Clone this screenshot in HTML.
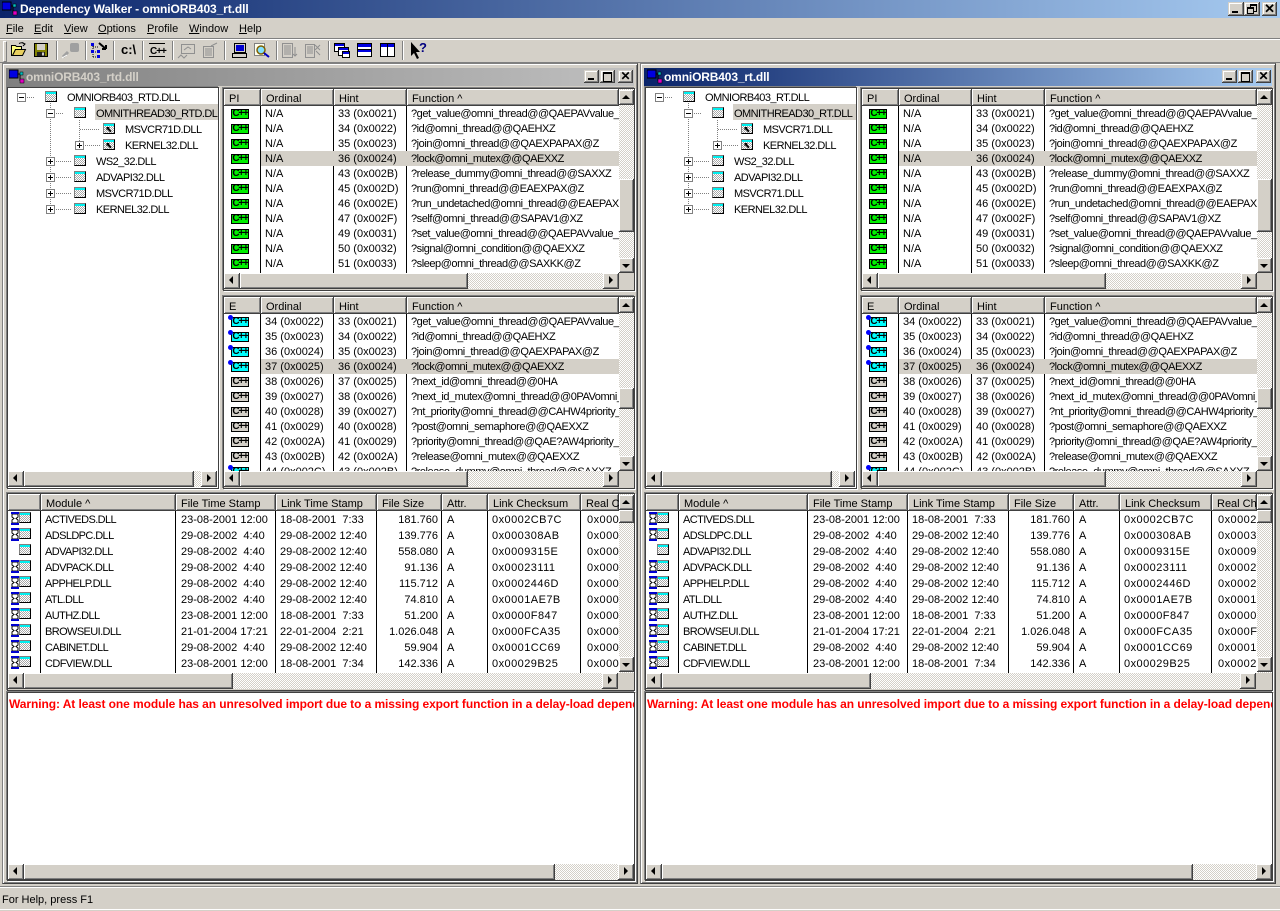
<!DOCTYPE html>
<html><head><meta charset="utf-8"><title>Dependency Walker</title>
<style>
html,body{margin:0;padding:0;width:1280px;height:911px;overflow:hidden;background:#d4d0c8;font:11px/15px "Liberation Sans",Arial,sans-serif;color:#000}
div,span,i{position:absolute;white-space:pre;font-style:normal;display:block}
u{text-decoration:underline}
#tb{left:0;top:0;width:1280px;height:18px;background:linear-gradient(90deg,#0a246a,#a6caf0);color:#fff;font-weight:bold;font-size:12px;letter-spacing:-.1px;line-height:18px}
.b{background:#d4d0c8;box-shadow:inset -1px -1px #404040,inset 1px 1px #fff,inset -2px -2px #808080}
.b2{background:#d4d0c8;box-shadow:inset -1px -1px #404040,inset 1px 1px #d4d0c8,inset -2px -2px #808080,inset 2px 2px #fff}
.al::after,.ar::after,.au::after,.ad::after{content:"";position:absolute;border:solid transparent;width:0;height:0}
.al::after{left:5px;top:3px;border-width:4px 4px 4px 0;border-right-color:#000}
.ar::after{left:6px;top:3px;border-width:4px 0 4px 4px;border-left-color:#000}
.au::after{left:3px;top:5px;border-width:0 4px 4px 4px;border-bottom-color:#000}
.ad::after{left:3px;top:6px;border-width:4px 4px 0 4px;border-top-color:#000}
.dt{background:repeating-conic-gradient(#d4d0c8 0 25%,#fff 0 50%) 0 0/2px 2px}
.mn{top:21px;height:16px;line-height:16px}
.sp{top:41px;width:1px;height:19px;background:#808080;box-shadow:1px 0 #fff}
.f{left:2px;top:63px;width:634px;height:819px;background:#d4d0c8;border:1px solid;border-color:#808080 #404040 #404040 #808080;box-shadow:inset 1px 1px #fff,inset -1px -1px #808080}
.t{left:6px;top:68px;width:628px;height:18px;line-height:19px;font-weight:bold;font-size:12px;letter-spacing:-.15px}
.ti{background:linear-gradient(90deg,#808080,#c0c0c0);color:#d4d0c8}
.ta{background:linear-gradient(90deg,#0a246a,#a6caf0);color:#fff}
.p{background:#fff;overflow:hidden;box-shadow:0 0 0 1px #404040,-1px -1px 0 1px #808080,1px 1px 0 1px #fff}
.c{left:7px;top:3px;width:16px;height:8px;border:1px solid #000;font:bold 10px/8px "Liberation Sans",sans-serif;letter-spacing:-1.2px;text-align:center;overflow:hidden}
.g{background:#00f000}.y{background:#00ffff}.n{background:#d4d0c8}
.d{left:4px;top:1px;width:5px;height:5px;border-radius:50%;background:#0000ff}
.r{left:0;width:395px;height:15px;line-height:15px}
.hl{background:linear-gradient(90deg,transparent 37px,#d4d0c8 37px)}
.r span{top:1px}
.r span:nth-of-type(1){left:41px}.r span:nth-of-type(2){left:114px}.r span:nth-of-type(3){left:187px;letter-spacing:-.45px}
.v{top:0;width:1px;background:#000}
.hd{top:0;height:17px;line-height:18px;background:#d4d0c8;box-shadow:inset -1px -1px #404040,inset 1px 1px #fff,inset -2px -2px #808080;overflow:hidden}
.hd span{left:5px;top:1px}
.tr{height:16px;line-height:18px;letter-spacing:-.55px}
.m{width:10px;height:9px;border:1px solid #808080;border-right-color:#000;border-bottom-color:#000;background:linear-gradient(#00f0f0,#00f0f0) 0 0/100% 2px no-repeat,repeating-conic-gradient(#a8a8a8 0 25%,#fff 0 50%) 0 0/2px 2px}
.e{width:7px;height:7px;border:1px solid #808080;background:#fff}
.e::before{content:"";position:absolute;left:1px;top:3px;width:5px;height:1px;background:#000}
.e.pl::after{content:"";position:absolute;left:3px;top:1px;width:1px;height:5px;background:#000}
.dh{height:1px;background:repeating-linear-gradient(90deg,#808080 0 1px,transparent 1px 2px)}
.dw{width:1px;background:repeating-linear-gradient(0deg,#808080 0 1px,transparent 1px 2px)}
.q{left:0;width:610px;height:16px;line-height:16px}
.q svg{position:absolute;left:3px;top:1px}
.q .m{left:11px;top:1px}
.q span{top:1px}
.q span:nth-of-type(1){letter-spacing:-.6px}
.q span:nth-of-type(6),.q span:nth-of-type(7){letter-spacing:.45px}
.ml .q span:nth-of-type(1){left:37px}.ml .q span:nth-of-type(2){left:173px}.ml .q span:nth-of-type(3){left:272px}.ml .q span:nth-of-type(4){left:369px;width:61px;text-align:right}.ml .q span:nth-of-type(5){left:439px}.ml .q span:nth-of-type(6){left:484px}.ml .q span:nth-of-type(7){left:579px}
.mr .q span:nth-of-type(1){left:37px}.mr .q span:nth-of-type(2){left:167px}.mr .q span:nth-of-type(3){left:266px}.mr .q span:nth-of-type(4){left:363px;width:61px;text-align:right}.mr .q span:nth-of-type(5){left:433px}.mr .q span:nth-of-type(6){left:478px}.mr .q span:nth-of-type(7){left:572px}
.log{left:1px;top:4px;color:#f00;font-weight:bold;font-size:12px;letter-spacing:-.08px;line-height:15px}
</style></head><body>
<svg width="0" height="0" style="position:absolute"><defs>
<symbol id="app" viewBox="0 0 16 16"><rect x="0" y="1" width="9" height="8" fill="#0000e0" stroke="#000"/><path d="M9 5h3M11 5v7M11 12h1" stroke="#000" fill="none"/><rect x="11" y="3" width="3" height="3" fill="#00c0c0" stroke="#000" stroke-width=".5"/><rect x="11" y="10" width="4" height="4" fill="#e000c0" stroke="#000" stroke-width=".5"/></symbol>
<symbol id="hg" viewBox="0 0 8 13"><path d="M1 2h6v3L5 6.500 7 8v3H1V8l2-1.500L1 5z" fill="#fff" stroke="#000"/><rect width="8" height="2" fill="#0000d0"/><rect y="11" width="8" height="2" fill="#0000d0"/></symbol>
<symbol id="ua" viewBox="0 0 12 10"><path d="M3 2h4L5.800 3.200 9 7 7.500 8.500 4 4.800 3 6z" fill="#000"/></symbol>
</defs></svg>

<div id="tb"><svg style="position:absolute;left:2px;top:1px" width="16" height="16"><use href="#app"/></svg><span style="left:20px;top:0">Dependency Walker - omniORB403_rt.dll</span>
<div class="b2" style="left:1228px;top:2px;width:16px;height:14px"><i style="left:4px;top:9px;width:6px;height:2px;background:#000"></i></div>
<div class="b2" style="left:1244px;top:2px;width:16px;height:14px"><i style="left:6px;top:2px;width:5px;height:5px;border:1px solid #000;border-top-width:2px"></i><i style="left:3px;top:5px;width:5px;height:4px;border:1px solid #000;border-top-width:2px;background:#d4d0c8"></i></div>
<div class="b2" style="left:1262px;top:2px;width:15px;height:14px;color:#000;font:bold 13px/14px 'Liberation Sans',sans-serif;text-align:center">✕</div></div>

<span class="mn" style="left:6px"><u>F</u>ile</span><span class="mn" style="left:34px"><u>E</u>dit</span><span class="mn" style="left:64px"><u>V</u>iew</span><span class="mn" style="left:98px"><u>O</u>ptions</span><span class="mn" style="left:147px"><u>P</u>rofile</span><span class="mn" style="left:189px"><u>W</u>indow</span><span class="mn" style="left:239px"><u>H</u>elp</span>

<div style="left:0;top:38px;width:1280px;height:1px;background:#808080"></div><div style="left:0;top:39px;width:1280px;height:1px;background:#fff"></div>
<div style="left:3px;top:41px;width:2px;height:19px;background:#d4d0c8;border:1px solid;border-color:#fff #808080 #808080 #fff"></div>
<i class="sp" style="left:56px"></i><i class="sp" style="left:85px"></i><i class="sp" style="left:113px"></i><i class="sp" style="left:142px"></i><i class="sp" style="left:172px"></i><i class="sp" style="left:224px"></i><i class="sp" style="left:276px"></i><i class="sp" style="left:328px"></i><i class="sp" style="left:402px"></i>

<svg style="position:absolute;left:0;top:36px" width="440" height="26" viewBox="0 36 440 26">
<path d="M11.500 45.500h4l1 1h5v3h-6l-3 6h-1z" fill="#ffff80" stroke="#000"/><path d="M12.500 55.500l3-6h10l-3 6z" fill="#e8d060" stroke="#000"/><path d="M19 43.500q3-1.500 5 0" stroke="#000" fill="none"/><path d="M22 42.500l3 1.500-2 2" stroke="#000" fill="none"/>
<rect x="34.500" y="43.500" width="13" height="13" fill="#808000" stroke="#000"/><rect x="37" y="44" width="8" height="6" fill="#d4d0c8"/><rect x="37" y="52" width="8" height="4" fill="#202020"/><rect x="42" y="52.500" width="2" height="3" fill="#d4d0c8"/>
<rect x="70" y="43" width="9" height="9" rx="2" fill="#a0a0a0"/><path d="M63 57l5-5" stroke="#a0a0a0" stroke-width="3"/><path d="M62 58l5-3" stroke="#fff"/>
<path d="M93 44v13M93 47h5M93 52h5M93 57h5" stroke="#000" stroke-dasharray="1 1" fill="none"/><rect x="91" y="43" width="3" height="3" fill="#0000e0"/><rect x="91" y="50" width="3" height="3" fill="#0000e0"/><rect x="97" y="50" width="3" height="3" fill="#0000e0"/><rect x="97" y="55" width="3" height="3" fill="#0000e0"/><path d="M99 43l7 6M106 49v-4M106 49h-4" stroke="#000" stroke-width="2" fill="none"/>
<text x="121" y="54" font-family="Liberation Sans" font-weight="bold" font-size="13">c:\</text>
<path d="M149 43.500h16M149 56.500h16" stroke="#000"/><text x="150" y="54" font-family="Liberation Sans" font-weight="bold" font-size="10" letter-spacing="-1">C++</text>
<g fill="none" stroke="#909090"><rect x="181.500" y="44.500" width="13" height="9"/><path d="M178 58l3-3 3 3 3-3M184 50l4-3 3 2"/><rect x="203.500" y="46.500" width="10" height="11"/><path d="M205 49h7M205 51h7M205 53h7M205 55h7M211 46l6-3"/></g>
<rect x="234.500" y="43.500" width="11" height="9" fill="#d4d0c8" stroke="#000"/><rect x="236" y="45" width="8" height="6" fill="#0000d0"/><rect x="232.500" y="53.500" width="14" height="4" fill="#d4d0c8" stroke="#000"/>
<rect x="254.500" y="43.500" width="10" height="12" fill="#fffff0" stroke="#808080"/><circle cx="261" cy="50" r="4" fill="#80e0ff" stroke="#806000" stroke-width="1.500"/><path d="M264 53l5 4" stroke="#0000c0" stroke-width="2"/>
<g fill="none" stroke="#909090"><rect x="282.500" y="43.500" width="10" height="14"/><path d="M284 46h7M284 48h7M284 50h7M284 52h7M284 54h7M295 47v9M293 54l2 2 2-2"/><rect x="305.500" y="44.500" width="9" height="13"/><path d="M307 47h6M307 49h6M307 51h6M307 53h6M315 45l5 5M320 45l-5 5M316 51l4 4"/></g>
<g fill="#fff" stroke="#000"><rect x="334.500" y="43.500" width="10" height="8"/><rect x="338.500" y="47.500" width="10" height="8"/><rect x="342.500" y="51.500" width="7" height="6"/><rect x="357.500" y="43.500" width="14" height="13"/><rect x="380.500" y="43.500" width="14" height="13"/></g>
<path d="M335 44h9v2h-9zM339 48h9v2h-9zM343 52h6v2h-6zM358 44h13v3h-13zM358 50h13v2h-13zM381 44h13v3h-13z" fill="#0000e0"/><path d="M357 49.500h14M387.500 44v12" stroke="#000"/>
<path d="M411 42v14l3-3 3 6 2-1-3-6h4z" fill="#000"/><text x="419" y="52" font-family="Liberation Sans" font-weight="bold" font-size="13" fill="#000080">?</text>
</svg>

<div style="left:0;top:62px;width:1280px;height:1px;background:#808080"></div>
<div style="left:0;top:886px;width:1280px;height:1px;background:#808080"></div>
<div style="left:0;top:887px;width:1280px;height:1px;background:#fff"></div>
<span style="left:2px;top:893px">For Help, press F1</span>
<div style="left:0;top:909px;width:1280px;height:1px;background:#fff"></div>

<!-- LEFT WINDOW -->
<div style="left:0;top:0;width:640px;height:890px">
<div class="f"></div>
<div class="t ti"><svg style="position:absolute;left:3px;top:1px" width="16" height="16"><use href="#app"/></svg><span style="left:20px;top:0">omniORB403_rtd.dll</span>
<div class="b2" style="left:578px;top:2px;width:15px;height:13px"><i style="left:4px;top:8px;width:6px;height:2px;background:#000"></i></div>
<div class="b2" style="left:594px;top:2px;width:15px;height:13px"><i style="left:3px;top:2px;width:7px;height:7px;border:1px solid #000;border-top-width:2px"></i></div>
<div class="b2" style="left:612px;top:2px;width:15px;height:13px;color:#000;font:bold 12px/13px 'Liberation Sans',sans-serif;text-align:center">✕</div></div>

<div class="p" style="left:8px;top:88px;width:210px;height:400px">
<div class="e" style="left:9px;top:5px"></div><div class="dh" style="left:19px;top:9px;width:8px"></div><i class="m" style="left:37px;top:3px"></i><span class="tr" style="left:59px;top:1px">OMNIORB403_RTD.DLL</span>
<div class="dw" style="left:42px;top:15px;height:107px"></div>
<div class="e" style="left:38px;top:21px"></div><div class="dh" style="left:48px;top:25px;width:8px"></div><i class="m" style="left:66px;top:19px"></i><span class="tr" style="left:87px;top:16px;width:122px;background:#d4d0c8;padding-left:1px;line-height:20px">OMNITHREAD30_RTD.DLL</span>
<div class="dw" style="left:71px;top:31px;height:26px"></div><div class="dh" style="left:72px;top:41px;width:20px"></div><i class="m" style="left:95px;top:35px"></i><svg style="position:absolute;left:96px;top:37px" width="10" height="9"><use href="#ua"/></svg><span class="tr" style="left:117px;top:33px">MSVCR71D.DLL</span>
<div class="e pl" style="left:67px;top:53px"></div><div class="dh" style="left:77px;top:57px;width:15px"></div><i class="m" style="left:95px;top:51px"></i><svg style="position:absolute;left:96px;top:53px" width="10" height="9"><use href="#ua"/></svg><span class="tr" style="left:117px;top:49px">KERNEL32.DLL</span>
<div class="e pl" style="left:38px;top:69px"></div><div class="dh" style="left:48px;top:73px;width:16px"></div><i class="m" style="left:66px;top:67px"></i><span class="tr" style="left:88px;top:65px">WS2_32.DLL</span>
<div class="e pl" style="left:38px;top:85px"></div><div class="dh" style="left:48px;top:89px;width:16px"></div><i class="m" style="left:66px;top:83px"></i><span class="tr" style="left:88px;top:81px">ADVAPI32.DLL</span>
<div class="e pl" style="left:38px;top:101px"></div><div class="dh" style="left:48px;top:105px;width:16px"></div><i class="m" style="left:66px;top:99px"></i><span class="tr" style="left:88px;top:97px">MSVCR71D.DLL</span>
<div class="e pl" style="left:38px;top:117px"></div><div class="dh" style="left:48px;top:121px;width:16px"></div><i class="m" style="left:66px;top:115px"></i><span class="tr" style="left:88px;top:113px">KERNEL32.DLL</span>
<div class="b al" style="left:0;top:383px;width:16px;height:16px"></div><div class="b" style="left:16px;top:383px;width:170px;height:16px"></div><div class="dt" style="left:186px;top:383px;width:7px;height:16px"></div><div class="b ar" style="left:193px;top:383px;width:16px;height:16px"></div>
</div>

<div class="p" style="left:224px;top:89px;width:410px;height:201px">
<i class="v" style="left:36px;height:184px"></i><i class="v" style="left:109px;height:184px"></i><i class="v" style="left:182px;height:184px"></i>
<div class="hd" style="left:0;width:37px"><span>PI</span></div><div class="hd" style="left:37px;width:73px"><span>Ordinal</span></div><div class="hd" style="left:110px;width:73px"><span>Hint</span></div><div class="hd" style="left:183px;width:212px"><span>Function ^</span></div>
<div class="r" style="top:17px"><i class="c g">C++</i><span>N/A</span><span>33 (0x0021)</span><span>?get_value@omni_thread@@QAEPAVvalue_t@@XZ</span></div>
<div class="r" style="top:32px"><i class="c g">C++</i><span>N/A</span><span>34 (0x0022)</span><span>?id@omni_thread@@QAEHXZ</span></div>
<div class="r" style="top:47px"><i class="c g">C++</i><span>N/A</span><span>35 (0x0023)</span><span>?join@omni_thread@@QAEXPAPAX@Z</span></div>
<div class="r hl" style="top:62px"><i class="c g">C++</i><span>N/A</span><span>36 (0x0024)</span><span>?lock@omni_mutex@@QAEXXZ</span></div>
<div class="r" style="top:77px"><i class="c g">C++</i><span>N/A</span><span>43 (0x002B)</span><span>?release_dummy@omni_thread@@SAXXZ</span></div>
<div class="r" style="top:92px"><i class="c g">C++</i><span>N/A</span><span>45 (0x002D)</span><span>?run@omni_thread@@EAEXPAX@Z</span></div>
<div class="r" style="top:107px"><i class="c g">C++</i><span>N/A</span><span>46 (0x002E)</span><span>?run_undetached@omni_thread@@EAEPAXPAX@Z</span></div>
<div class="r" style="top:122px"><i class="c g">C++</i><span>N/A</span><span>47 (0x002F)</span><span>?self@omni_thread@@SAPAV1@XZ</span></div>
<div class="r" style="top:137px"><i class="c g">C++</i><span>N/A</span><span>49 (0x0031)</span><span>?set_value@omni_thread@@QAEPAVvalue_t@@XZ</span></div>
<div class="r" style="top:152px"><i class="c g">C++</i><span>N/A</span><span>50 (0x0032)</span><span>?signal@omni_condition@@QAEXXZ</span></div>
<div class="r" style="top:167px"><i class="c g">C++</i><span>N/A</span><span>51 (0x0033)</span><span>?sleep@omni_thread@@SAXKK@Z</span></div>
<div class="r" style="top:182px"><i class="c g">C++</i></div>
<div class="dt" style="left:395px;top:0;width:15px;height:184px"></div>
<div class="b au" style="left:395px;top:1px;width:15px;height:15px"></div><div class="b" style="left:395px;top:90px;width:15px;height:53px"></div><div class="b ad" style="left:395px;top:169px;width:15px;height:15px"></div>
<div style="left:0;top:184px;width:410px;height:17px;background:#d4d0c8"></div>
<div class="b al" style="left:0;top:184px;width:16px;height:16px"></div><div class="b" style="left:16px;top:184px;width:228px;height:16px"></div><div class="dt" style="left:244px;top:184px;width:135px;height:16px"></div><div class="b ar" style="left:379px;top:184px;width:16px;height:16px"></div>
</div>

<div class="p" style="left:224px;top:297px;width:410px;height:191px">
<i class="v" style="left:36px;height:174px"></i><i class="v" style="left:109px;height:174px"></i><i class="v" style="left:182px;height:174px"></i>
<div class="hd" style="left:0;width:37px"><span>E</span></div><div class="hd" style="left:37px;width:73px"><span>Ordinal</span></div><div class="hd" style="left:110px;width:73px"><span>Hint</span></div><div class="hd" style="left:183px;width:212px"><span>Function ^</span></div>
<div class="r" style="top:17px"><i class="c y">C++</i><i class="d"></i><span>34 (0x0022)</span><span>33 (0x0021)</span><span>?get_value@omni_thread@@QAEPAVvalue_t@@XZ</span></div>
<div class="r" style="top:32px"><i class="c y">C++</i><i class="d"></i><span>35 (0x0023)</span><span>34 (0x0022)</span><span>?id@omni_thread@@QAEHXZ</span></div>
<div class="r" style="top:47px"><i class="c y">C++</i><i class="d"></i><span>36 (0x0024)</span><span>35 (0x0023)</span><span>?join@omni_thread@@QAEXPAPAX@Z</span></div>
<div class="r hl" style="top:62px"><i class="c y">C++</i><i class="d"></i><span>37 (0x0025)</span><span>36 (0x0024)</span><span>?lock@omni_mutex@@QAEXXZ</span></div>
<div class="r" style="top:77px"><i class="c n">C++</i><span>38 (0x0026)</span><span>37 (0x0025)</span><span>?next_id@omni_thread@@0HA</span></div>
<div class="r" style="top:92px"><i class="c n">C++</i><span>39 (0x0027)</span><span>38 (0x0026)</span><span>?next_id_mutex@omni_thread@@0PAVomni_mutex@@A</span></div>
<div class="r" style="top:107px"><i class="c n">C++</i><span>40 (0x0028)</span><span>39 (0x0027)</span><span>?nt_priority@omni_thread@@CAHW4priority_t@@</span></div>
<div class="r" style="top:122px"><i class="c n">C++</i><span>41 (0x0029)</span><span>40 (0x0028)</span><span>?post@omni_semaphore@@QAEXXZ</span></div>
<div class="r" style="top:137px"><i class="c n">C++</i><span>42 (0x002A)</span><span>41 (0x0029)</span><span>?priority@omni_thread@@QAE?AW4priority_t@@</span></div>
<div class="r" style="top:152px"><i class="c n">C++</i><span>43 (0x002B)</span><span>42 (0x002A)</span><span>?release@omni_mutex@@QAEXXZ</span></div>
<div class="r" style="top:167px"><i class="c y">C++</i><i class="d"></i><span>44 (0x002C)</span><span>43 (0x002B)</span><span>?release_dummy@omni_thread@@SAXXZ</span></div>
<div class="dt" style="left:395px;top:0;width:15px;height:174px"></div>
<div class="b au" style="left:395px;top:1px;width:15px;height:15px"></div><div class="b" style="left:395px;top:91px;width:15px;height:21px"></div><div class="b ad" style="left:395px;top:159px;width:15px;height:15px"></div>
<div style="left:0;top:174px;width:410px;height:17px;background:#d4d0c8"></div>
<div class="b al" style="left:0;top:174px;width:16px;height:16px"></div><div class="b" style="left:16px;top:174px;width:228px;height:16px"></div><div class="dt" style="left:244px;top:174px;width:135px;height:16px"></div><div class="b ar" style="left:379px;top:174px;width:16px;height:16px"></div>
</div>

<div class="p ml" style="left:8px;top:494px;width:626px;height:196px">
<i class="v" style="left:32px;height:179px"></i><i class="v" style="left:167px;height:179px"></i><i class="v" style="left:267px;height:179px"></i><i class="v" style="left:368px;height:179px"></i><i class="v" style="left:433px;height:179px"></i><i class="v" style="left:479px;height:179px"></i><i class="v" style="left:572px;height:179px"></i>
<div class="hd" style="left:0;width:33px"></div><div class="hd" style="left:33px;width:135px"><span>Module ^</span></div><div class="hd" style="left:168px;width:100px"><span>File Time Stamp</span></div><div class="hd" style="left:268px;width:101px"><span>Link Time Stamp</span></div><div class="hd" style="left:369px;width:65px"><span>File Size</span></div><div class="hd" style="left:434px;width:46px"><span>Attr.</span></div><div class="hd" style="left:480px;width:93px"><span>Link Checksum</span></div><div class="hd" style="left:573px;width:38px"><span>Real Ch</span></div>
<div class="q" style="top:17px"><svg width="8" height="13"><use href="#hg"/></svg><i class="m"></i><span>ACTIVEDS.DLL</span><span>23-08-2001 12:00</span><span>18-08-2001  7:33</span><span>181.760</span><span>A</span><span>0x0002CB7C</span><span>0x0002CB7C</span></div>
<div class="q" style="top:33px"><svg width="8" height="13"><use href="#hg"/></svg><i class="m"></i><span>ADSLDPC.DLL</span><span>29-08-2002  4:40</span><span>29-08-2002 12:40</span><span>139.776</span><span>A</span><span>0x000308AB</span><span>0x000308AB</span></div>
<div class="q" style="top:49px"><i class="m"></i><span>ADVAPI32.DLL</span><span>29-08-2002  4:40</span><span>29-08-2002 12:40</span><span>558.080</span><span>A</span><span>0x0009315E</span><span>0x0009315E</span></div>
<div class="q" style="top:65px"><svg width="8" height="13"><use href="#hg"/></svg><i class="m"></i><span>ADVPACK.DLL</span><span>29-08-2002  4:40</span><span>29-08-2002 12:40</span><span>91.136</span><span>A</span><span>0x00023111</span><span>0x00023111</span></div>
<div class="q" style="top:81px"><svg width="8" height="13"><use href="#hg"/></svg><i class="m"></i><span>APPHELP.DLL</span><span>29-08-2002  4:40</span><span>29-08-2002 12:40</span><span>115.712</span><span>A</span><span>0x0002446D</span><span>0x0002446D</span></div>
<div class="q" style="top:97px"><svg width="8" height="13"><use href="#hg"/></svg><i class="m"></i><span>ATL.DLL</span><span>29-08-2002  4:40</span><span>29-08-2002 12:40</span><span>74.810</span><span>A</span><span>0x0001AE7B</span><span>0x0001AE7B</span></div>
<div class="q" style="top:113px"><svg width="8" height="13"><use href="#hg"/></svg><i class="m"></i><span>AUTHZ.DLL</span><span>23-08-2001 12:00</span><span>18-08-2001  7:33</span><span>51.200</span><span>A</span><span>0x0000F847</span><span>0x0000F847</span></div>
<div class="q" style="top:129px"><svg width="8" height="13"><use href="#hg"/></svg><i class="m"></i><span>BROWSEUI.DLL</span><span>21-01-2004 17:21</span><span>22-01-2004  2:21</span><span>1.026.048</span><span>A</span><span>0x000FCA35</span><span>0x000FCA35</span></div>
<div class="q" style="top:145px"><svg width="8" height="13"><use href="#hg"/></svg><i class="m"></i><span>CABINET.DLL</span><span>29-08-2002  4:40</span><span>29-08-2002 12:40</span><span>59.904</span><span>A</span><span>0x0001CC69</span><span>0x0001CC69</span></div>
<div class="q" style="top:161px"><svg width="8" height="13"><use href="#hg"/></svg><i class="m"></i><span>CDFVIEW.DLL</span><span>23-08-2001 12:00</span><span>18-08-2001  7:34</span><span>142.336</span><span>A</span><span>0x00029B25</span><span>0x00029B25</span></div>
<div class="dt" style="left:611px;top:0;width:15px;height:179px"></div>
<div class="b au" style="left:611px;top:1px;width:15px;height:15px"></div><div class="b" style="left:611px;top:16px;width:15px;height:13px"></div><div class="b ad" style="left:611px;top:163px;width:15px;height:15px"></div>
<div style="left:0;top:179px;width:626px;height:17px;background:#d4d0c8"></div>
<div class="b al" style="left:0;top:179px;width:16px;height:16px"></div><div class="b" style="left:16px;top:179px;width:209px;height:16px"></div><div class="dt" style="left:225px;top:179px;width:369px;height:16px"></div><div class="b ar" style="left:594px;top:179px;width:16px;height:16px"></div>
</div>

<div class="p" style="left:8px;top:693px;width:626px;height:187px">
<span class="log">Warning: At least one module has an unresolved import due to a missing export function in a delay-load dependency</span>
<div class="b al" style="left:0;top:171px;width:16px;height:16px"></div><div class="b" style="left:16px;top:171px;width:531px;height:16px"></div><div class="dt" style="left:547px;top:171px;width:63px;height:16px"></div><div class="b ar" style="left:610px;top:171px;width:16px;height:16px"></div>
</div>
</div>

<!-- RIGHT WINDOW -->
<div style="left:638px;top:0;width:640px;height:890px">
<div class="f"></div>
<div class="t ta"><svg style="position:absolute;left:3px;top:1px" width="16" height="16"><use href="#app"/></svg><span style="left:20px;top:0">omniORB403_rt.dll</span>
<div class="b2" style="left:578px;top:2px;width:15px;height:13px"><i style="left:4px;top:8px;width:6px;height:2px;background:#000"></i></div>
<div class="b2" style="left:594px;top:2px;width:15px;height:13px"><i style="left:3px;top:2px;width:7px;height:7px;border:1px solid #000;border-top-width:2px"></i></div>
<div class="b2" style="left:612px;top:2px;width:15px;height:13px;color:#000;font:bold 12px/13px 'Liberation Sans',sans-serif;text-align:center">✕</div></div>

<div class="p" style="left:8px;top:88px;width:210px;height:400px">
<div class="e" style="left:9px;top:5px"></div><div class="dh" style="left:19px;top:9px;width:8px"></div><i class="m" style="left:37px;top:3px"></i><span class="tr" style="left:59px;top:1px">OMNIORB403_RT.DLL</span>
<div class="dw" style="left:42px;top:15px;height:107px"></div>
<div class="e" style="left:38px;top:21px"></div><div class="dh" style="left:48px;top:25px;width:8px"></div><i class="m" style="left:66px;top:19px"></i><span class="tr" style="left:87px;top:16px;width:122px;background:#d4d0c8;padding-left:1px;line-height:20px">OMNITHREAD30_RT.DLL</span>
<div class="dw" style="left:71px;top:31px;height:26px"></div><div class="dh" style="left:72px;top:41px;width:20px"></div><i class="m" style="left:95px;top:35px"></i><svg style="position:absolute;left:96px;top:37px" width="10" height="9"><use href="#ua"/></svg><span class="tr" style="left:117px;top:33px">MSVCR71.DLL</span>
<div class="e pl" style="left:67px;top:53px"></div><div class="dh" style="left:77px;top:57px;width:15px"></div><i class="m" style="left:95px;top:51px"></i><svg style="position:absolute;left:96px;top:53px" width="10" height="9"><use href="#ua"/></svg><span class="tr" style="left:117px;top:49px">KERNEL32.DLL</span>
<div class="e pl" style="left:38px;top:69px"></div><div class="dh" style="left:48px;top:73px;width:16px"></div><i class="m" style="left:66px;top:67px"></i><span class="tr" style="left:88px;top:65px">WS2_32.DLL</span>
<div class="e pl" style="left:38px;top:85px"></div><div class="dh" style="left:48px;top:89px;width:16px"></div><i class="m" style="left:66px;top:83px"></i><span class="tr" style="left:88px;top:81px">ADVAPI32.DLL</span>
<div class="e pl" style="left:38px;top:101px"></div><div class="dh" style="left:48px;top:105px;width:16px"></div><i class="m" style="left:66px;top:99px"></i><span class="tr" style="left:88px;top:97px">MSVCR71.DLL</span>
<div class="e pl" style="left:38px;top:117px"></div><div class="dh" style="left:48px;top:121px;width:16px"></div><i class="m" style="left:66px;top:115px"></i><span class="tr" style="left:88px;top:113px">KERNEL32.DLL</span>
<div class="b al" style="left:0;top:383px;width:16px;height:16px"></div><div class="b" style="left:16px;top:383px;width:170px;height:16px"></div><div class="dt" style="left:186px;top:383px;width:7px;height:16px"></div><div class="b ar" style="left:193px;top:383px;width:16px;height:16px"></div>
</div>

<div class="p" style="left:224px;top:89px;width:410px;height:201px">
<i class="v" style="left:36px;height:184px"></i><i class="v" style="left:109px;height:184px"></i><i class="v" style="left:182px;height:184px"></i>
<div class="hd" style="left:0;width:37px"><span>PI</span></div><div class="hd" style="left:37px;width:73px"><span>Ordinal</span></div><div class="hd" style="left:110px;width:73px"><span>Hint</span></div><div class="hd" style="left:183px;width:212px"><span>Function ^</span></div>
<div class="r" style="top:17px"><i class="c g">C++</i><span>N/A</span><span>33 (0x0021)</span><span>?get_value@omni_thread@@QAEPAVvalue_t@@XZ</span></div>
<div class="r" style="top:32px"><i class="c g">C++</i><span>N/A</span><span>34 (0x0022)</span><span>?id@omni_thread@@QAEHXZ</span></div>
<div class="r" style="top:47px"><i class="c g">C++</i><span>N/A</span><span>35 (0x0023)</span><span>?join@omni_thread@@QAEXPAPAX@Z</span></div>
<div class="r hl" style="top:62px"><i class="c g">C++</i><span>N/A</span><span>36 (0x0024)</span><span>?lock@omni_mutex@@QAEXXZ</span></div>
<div class="r" style="top:77px"><i class="c g">C++</i><span>N/A</span><span>43 (0x002B)</span><span>?release_dummy@omni_thread@@SAXXZ</span></div>
<div class="r" style="top:92px"><i class="c g">C++</i><span>N/A</span><span>45 (0x002D)</span><span>?run@omni_thread@@EAEXPAX@Z</span></div>
<div class="r" style="top:107px"><i class="c g">C++</i><span>N/A</span><span>46 (0x002E)</span><span>?run_undetached@omni_thread@@EAEPAXPAX@Z</span></div>
<div class="r" style="top:122px"><i class="c g">C++</i><span>N/A</span><span>47 (0x002F)</span><span>?self@omni_thread@@SAPAV1@XZ</span></div>
<div class="r" style="top:137px"><i class="c g">C++</i><span>N/A</span><span>49 (0x0031)</span><span>?set_value@omni_thread@@QAEPAVvalue_t@@XZ</span></div>
<div class="r" style="top:152px"><i class="c g">C++</i><span>N/A</span><span>50 (0x0032)</span><span>?signal@omni_condition@@QAEXXZ</span></div>
<div class="r" style="top:167px"><i class="c g">C++</i><span>N/A</span><span>51 (0x0033)</span><span>?sleep@omni_thread@@SAXKK@Z</span></div>
<div class="r" style="top:182px"><i class="c g">C++</i></div>
<div class="dt" style="left:395px;top:0;width:15px;height:184px"></div>
<div class="b au" style="left:395px;top:1px;width:15px;height:15px"></div><div class="b" style="left:395px;top:90px;width:15px;height:53px"></div><div class="b ad" style="left:395px;top:169px;width:15px;height:15px"></div>
<div style="left:0;top:184px;width:410px;height:17px;background:#d4d0c8"></div>
<div class="b al" style="left:0;top:184px;width:16px;height:16px"></div><div class="b" style="left:16px;top:184px;width:228px;height:16px"></div><div class="dt" style="left:244px;top:184px;width:135px;height:16px"></div><div class="b ar" style="left:379px;top:184px;width:16px;height:16px"></div>
</div>

<div class="p" style="left:224px;top:297px;width:410px;height:191px">
<i class="v" style="left:36px;height:174px"></i><i class="v" style="left:109px;height:174px"></i><i class="v" style="left:182px;height:174px"></i>
<div class="hd" style="left:0;width:37px"><span>E</span></div><div class="hd" style="left:37px;width:73px"><span>Ordinal</span></div><div class="hd" style="left:110px;width:73px"><span>Hint</span></div><div class="hd" style="left:183px;width:212px"><span>Function ^</span></div>
<div class="r" style="top:17px"><i class="c y">C++</i><i class="d"></i><span>34 (0x0022)</span><span>33 (0x0021)</span><span>?get_value@omni_thread@@QAEPAVvalue_t@@XZ</span></div>
<div class="r" style="top:32px"><i class="c y">C++</i><i class="d"></i><span>35 (0x0023)</span><span>34 (0x0022)</span><span>?id@omni_thread@@QAEHXZ</span></div>
<div class="r" style="top:47px"><i class="c y">C++</i><i class="d"></i><span>36 (0x0024)</span><span>35 (0x0023)</span><span>?join@omni_thread@@QAEXPAPAX@Z</span></div>
<div class="r hl" style="top:62px"><i class="c y">C++</i><i class="d"></i><span>37 (0x0025)</span><span>36 (0x0024)</span><span>?lock@omni_mutex@@QAEXXZ</span></div>
<div class="r" style="top:77px"><i class="c n">C++</i><span>38 (0x0026)</span><span>37 (0x0025)</span><span>?next_id@omni_thread@@0HA</span></div>
<div class="r" style="top:92px"><i class="c n">C++</i><span>39 (0x0027)</span><span>38 (0x0026)</span><span>?next_id_mutex@omni_thread@@0PAVomni_mutex@@A</span></div>
<div class="r" style="top:107px"><i class="c n">C++</i><span>40 (0x0028)</span><span>39 (0x0027)</span><span>?nt_priority@omni_thread@@CAHW4priority_t@@</span></div>
<div class="r" style="top:122px"><i class="c n">C++</i><span>41 (0x0029)</span><span>40 (0x0028)</span><span>?post@omni_semaphore@@QAEXXZ</span></div>
<div class="r" style="top:137px"><i class="c n">C++</i><span>42 (0x002A)</span><span>41 (0x0029)</span><span>?priority@omni_thread@@QAE?AW4priority_t@@</span></div>
<div class="r" style="top:152px"><i class="c n">C++</i><span>43 (0x002B)</span><span>42 (0x002A)</span><span>?release@omni_mutex@@QAEXXZ</span></div>
<div class="r" style="top:167px"><i class="c y">C++</i><i class="d"></i><span>44 (0x002C)</span><span>43 (0x002B)</span><span>?release_dummy@omni_thread@@SAXXZ</span></div>
<div class="dt" style="left:395px;top:0;width:15px;height:174px"></div>
<div class="b au" style="left:395px;top:1px;width:15px;height:15px"></div><div class="b" style="left:395px;top:91px;width:15px;height:21px"></div><div class="b ad" style="left:395px;top:159px;width:15px;height:15px"></div>
<div style="left:0;top:174px;width:410px;height:17px;background:#d4d0c8"></div>
<div class="b al" style="left:0;top:174px;width:16px;height:16px"></div><div class="b" style="left:16px;top:174px;width:228px;height:16px"></div><div class="dt" style="left:244px;top:174px;width:135px;height:16px"></div><div class="b ar" style="left:379px;top:174px;width:16px;height:16px"></div>
</div>

<div class="p mr" style="left:8px;top:494px;width:626px;height:196px">
<i class="v" style="left:32px;height:179px"></i><i class="v" style="left:161px;height:179px"></i><i class="v" style="left:261px;height:179px"></i><i class="v" style="left:362px;height:179px"></i><i class="v" style="left:427px;height:179px"></i><i class="v" style="left:473px;height:179px"></i><i class="v" style="left:565px;height:179px"></i>
<div class="hd" style="left:0;width:33px"></div><div class="hd" style="left:33px;width:129px"><span>Module ^</span></div><div class="hd" style="left:162px;width:100px"><span>File Time Stamp</span></div><div class="hd" style="left:262px;width:101px"><span>Link Time Stamp</span></div><div class="hd" style="left:363px;width:65px"><span>File Size</span></div><div class="hd" style="left:428px;width:46px"><span>Attr.</span></div><div class="hd" style="left:474px;width:92px"><span>Link Checksum</span></div><div class="hd" style="left:566px;width:45px"><span>Real Ch</span></div>
<div class="q" style="top:17px"><svg width="8" height="13"><use href="#hg"/></svg><i class="m"></i><span>ACTIVEDS.DLL</span><span>23-08-2001 12:00</span><span>18-08-2001  7:33</span><span>181.760</span><span>A</span><span>0x0002CB7C</span><span>0x0002CB7C</span></div>
<div class="q" style="top:33px"><svg width="8" height="13"><use href="#hg"/></svg><i class="m"></i><span>ADSLDPC.DLL</span><span>29-08-2002  4:40</span><span>29-08-2002 12:40</span><span>139.776</span><span>A</span><span>0x000308AB</span><span>0x000308AB</span></div>
<div class="q" style="top:49px"><i class="m"></i><span>ADVAPI32.DLL</span><span>29-08-2002  4:40</span><span>29-08-2002 12:40</span><span>558.080</span><span>A</span><span>0x0009315E</span><span>0x0009315E</span></div>
<div class="q" style="top:65px"><svg width="8" height="13"><use href="#hg"/></svg><i class="m"></i><span>ADVPACK.DLL</span><span>29-08-2002  4:40</span><span>29-08-2002 12:40</span><span>91.136</span><span>A</span><span>0x00023111</span><span>0x00023111</span></div>
<div class="q" style="top:81px"><svg width="8" height="13"><use href="#hg"/></svg><i class="m"></i><span>APPHELP.DLL</span><span>29-08-2002  4:40</span><span>29-08-2002 12:40</span><span>115.712</span><span>A</span><span>0x0002446D</span><span>0x0002446D</span></div>
<div class="q" style="top:97px"><svg width="8" height="13"><use href="#hg"/></svg><i class="m"></i><span>ATL.DLL</span><span>29-08-2002  4:40</span><span>29-08-2002 12:40</span><span>74.810</span><span>A</span><span>0x0001AE7B</span><span>0x0001AE7B</span></div>
<div class="q" style="top:113px"><svg width="8" height="13"><use href="#hg"/></svg><i class="m"></i><span>AUTHZ.DLL</span><span>23-08-2001 12:00</span><span>18-08-2001  7:33</span><span>51.200</span><span>A</span><span>0x0000F847</span><span>0x0000F847</span></div>
<div class="q" style="top:129px"><svg width="8" height="13"><use href="#hg"/></svg><i class="m"></i><span>BROWSEUI.DLL</span><span>21-01-2004 17:21</span><span>22-01-2004  2:21</span><span>1.026.048</span><span>A</span><span>0x000FCA35</span><span>0x000FCA35</span></div>
<div class="q" style="top:145px"><svg width="8" height="13"><use href="#hg"/></svg><i class="m"></i><span>CABINET.DLL</span><span>29-08-2002  4:40</span><span>29-08-2002 12:40</span><span>59.904</span><span>A</span><span>0x0001CC69</span><span>0x0001CC69</span></div>
<div class="q" style="top:161px"><svg width="8" height="13"><use href="#hg"/></svg><i class="m"></i><span>CDFVIEW.DLL</span><span>23-08-2001 12:00</span><span>18-08-2001  7:34</span><span>142.336</span><span>A</span><span>0x00029B25</span><span>0x00029B25</span></div>
<div class="dt" style="left:611px;top:0;width:15px;height:179px"></div>
<div class="b au" style="left:611px;top:1px;width:15px;height:15px"></div><div class="b" style="left:611px;top:16px;width:15px;height:13px"></div><div class="b ad" style="left:611px;top:163px;width:15px;height:15px"></div>
<div style="left:0;top:179px;width:626px;height:17px;background:#d4d0c8"></div>
<div class="b al" style="left:0;top:179px;width:16px;height:16px"></div><div class="b" style="left:16px;top:179px;width:209px;height:16px"></div><div class="dt" style="left:225px;top:179px;width:369px;height:16px"></div><div class="b ar" style="left:594px;top:179px;width:16px;height:16px"></div>
</div>

<div class="p" style="left:8px;top:693px;width:626px;height:187px">
<span class="log">Warning: At least one module has an unresolved import due to a missing export function in a delay-load dependency</span>
<div class="b al" style="left:0;top:171px;width:16px;height:16px"></div><div class="b" style="left:16px;top:171px;width:531px;height:16px"></div><div class="dt" style="left:547px;top:171px;width:63px;height:16px"></div><div class="b ar" style="left:610px;top:171px;width:16px;height:16px"></div>
</div>
</div>
</body></html>
